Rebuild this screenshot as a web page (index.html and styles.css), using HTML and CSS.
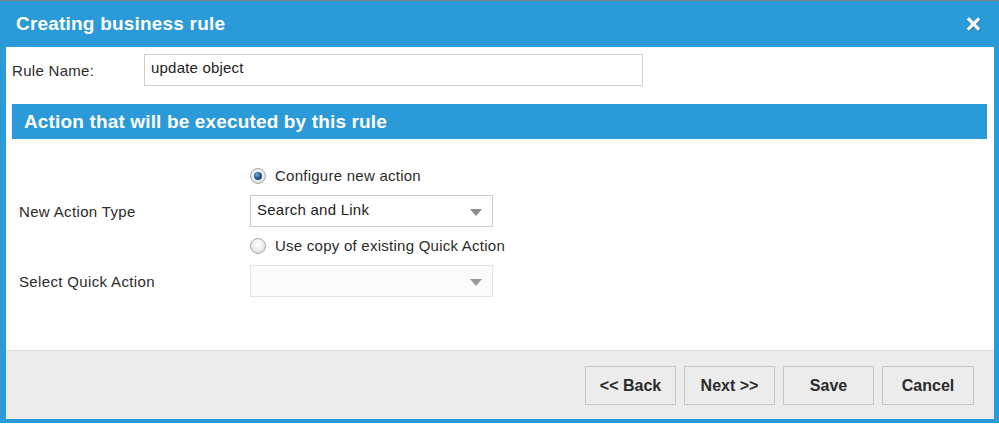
FILE: index.html
```html
<!DOCTYPE html>
<html>
<head>
<meta charset="utf-8">
<link rel="stylesheet" href="styles.css">
</head>
<body>
<div class="dialog">
  <div class="titlebar">
    <span class="title">Creating business rule</span>
    <svg class="close" width="16" height="15" viewBox="0 0 16 15">
      <g stroke="#1a5f8a" stroke-width="3.4" stroke-linecap="square" opacity="0.6" transform="translate(0.8,0.8)">
        <line x1="3" y1="2.5" x2="12" y2="11.5"/><line x1="12" y1="2.5" x2="3" y2="11.5"/>
      </g>
      <g stroke="#ffffff" stroke-width="3.2" stroke-linecap="square">
        <line x1="3" y1="2.5" x2="12" y2="11.5"/><line x1="12" y1="2.5" x2="3" y2="11.5"/>
      </g>
    </svg>
  </div>
  <div class="content">
    <div class="rule-row">
      <span class="rule-label">Rule Name:</span>
      <div class="text-input">update object</div>
    </div>
    <div class="section-header">Action that will be executed by this rule</div>
    <div class="form">
      <div class="cell-empty"></div>
      <label class="radio-line"><span class="radio checked"></span>Configure new action</label>
      <div class="form-label">New Action Type</div>
      <div class="select"><span>Search and Link</span><span class="arrow"></span></div>
      <div class="cell-empty"></div>
      <label class="radio-line"><span class="radio"></span>Use copy of existing Quick Action</label>
      <div class="form-label">Select Quick Action</div>
      <div class="select disabled"><span></span><span class="arrow"></span></div>
    </div>
  </div>
  <div class="footer">
    <button class="btn">&lt;&lt; Back</button>
    <button class="btn">Next &gt;&gt;</button>
    <button class="btn">Save</button>
    <button class="btn btn-wide">Cancel</button>
  </div>
</div>
</body>
</html>
```
FILE: styles.css
```css
html, body {
  margin: 0;
  padding: 0;
  background: #ffffff;
  font-family: "Liberation Sans", Arial, sans-serif;
}

.dialog {
  width: 999px;
  height: 423px;
  box-sizing: border-box;
  background: #2a9ad8;
  border-top: 1px solid #7d8286;
  padding: 0 5px 4px 6px;
  display: flex;
  flex-direction: column;
}

.titlebar {
  height: 46px;
  flex: none;
  display: flex;
  align-items: center;
  justify-content: space-between;
  padding: 0 12px 0 10px;
}

.title {
  color: #ffffff;
  font-weight: bold;
  font-size: 19px;
  letter-spacing: 0.2px;
  margin-top: -1px;
}

.close {
  display: block;
  margin-top: 1px;
}

.content {
  flex: 1;
  background: #ffffff;
  display: flex;
  flex-direction: column;
}

.rule-row {
  display: flex;
  align-items: center;
  margin-top: 7px;
  padding-left: 6px;
}

.rule-label {
  width: 132px;
  font-size: 15px;
  letter-spacing: 0.3px;
  color: #2b2b2b;
  margin-top: 1px;
}

.text-input {
  width: 499px;
  height: 32px;
  box-sizing: border-box;
  border: 1px solid #cfcfcf;
  font-size: 15px;
  letter-spacing: 0.2px;
  color: #222;
  padding: 4px 6px 0;
}

.section-header {
  margin: 18px 7px 0 6px;
  height: 35px;
  background: #2a9ad8;
  color: #ffffff;
  font-weight: bold;
  font-size: 19px;
  letter-spacing: 0.15px;
  padding-left: 12px;
  line-height: 35px;
  box-sizing: border-box;
}

.form {
  display: grid;
  grid-template-columns: 231px 243px;
  grid-template-rows: 20px 32px 20px 32px;
  row-gap: 9px;
  margin-top: 27px;
  padding-left: 13px;
  align-items: center;
}

.form-label {
  font-size: 15px;
  letter-spacing: 0.35px;
  color: #2b2b2b;
}

.radio-line {
  display: flex;
  align-items: center;
  font-size: 15px;
  letter-spacing: 0.25px;
  color: #2b2b2b;
  white-space: nowrap;
  margin-top: -1px;
}

.radio {
  width: 16px;
  height: 16px;
  box-sizing: border-box;
  border-radius: 50%;
  border: 1px solid #a9a9a9;
  background: radial-gradient(circle at 50% 40%, #ffffff 0%, #f0f0f0 45%, #cfcfcf 100%);
  margin-right: 9px;
  display: flex;
  align-items: center;
  justify-content: center;
  flex: none;
}

.radio.checked::after {
  content: "";
  width: 8px;
  height: 8px;
  border-radius: 50%;
  background: radial-gradient(circle at 40% 35%, #7fb6e0 0%, #1f5f96 45%, #0e2f55 100%);
}

.select {
  height: 32px;
  box-sizing: border-box;
  border: 1px solid #cccccc;
  display: flex;
  align-items: center;
  justify-content: space-between;
  padding: 0 10px 0 6px;
  font-size: 15px;
  letter-spacing: 0.25px;
  color: #222;
}

.select span:first-child {
  margin-top: -3px;
}

.select.disabled {
  border-color: #e3e3e3;
  background: #fbfbfb;
}

.arrow {
  width: 0;
  height: 0;
  border-left: 6px solid transparent;
  border-right: 6px solid transparent;
  border-top: 7px solid #8c8c8c;
  margin-top: 2px;
}

.select.disabled .arrow {
  border-top-color: #999;
}

.footer {
  flex: none;
  height: 69px;
  box-sizing: border-box;
  background: #ececec;
  border-top: 1px solid #dcdcdc;
  display: flex;
  justify-content: flex-end;
  align-items: flex-start;
  gap: 8px;
  padding: 15px 20px 0 0;
}

.btn {
  width: 91px;
  height: 39px;
  box-sizing: border-box;
  background: #ececec;
  border: 1px solid #c6c6c6;
  font-family: "Liberation Sans", Arial, sans-serif;
  font-weight: bold;
  font-size: 16px;
  color: #2b2b2b;
  padding: 0;
}

.btn-wide {
  width: 92px;
}
```
